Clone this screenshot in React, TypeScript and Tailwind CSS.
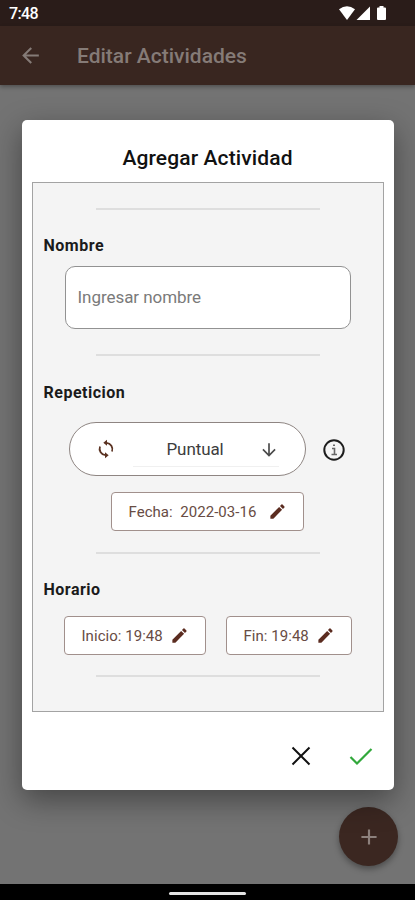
import React from "react";
import { MdArrowBack, MdArrowDownward, MdEdit, MdAdd } from "react-icons/md";

// Thin separator between the sections of the form
const Divider = () => <div className="ml-[63px] h-[2px] w-[224px] shrink-0 bg-[#dedede]" />;

const SectionTitle = ({ children }: { children: React.ReactNode }) => (
  <h3 className="ml-[11px] h-5 text-[16px] leading-5 font-bold tracking-[0.5px] text-[#1b1b1b]">{children}</h3>
);

// Outlined button with a pencil, used for the date and the hours
const EditButton = ({ label, className }: { label: string; className: string }) => (
  <button
    className={`flex h-[39px] items-center justify-between rounded-[4px] border border-[#a1908c] bg-white pr-[16px] pl-[17px] text-[15px] whitespace-pre text-[#684c44] ${className}`}
  >
    <span className="pt-px tracking-[0.04px]">{label}</span>
    <MdEdit size={19} className="text-[#5b2c20]" />
  </button>
);

// Two circular arrows
const RepeatIcon = () => (
  <svg width="20" height="20" viewBox="0 0 20 20" fill="none" stroke="#5b3322" strokeWidth="1.800">
    <path d="M10.500 3.800A6.500 6.500 0 0 1 16 12.500" />
    <path d="M9.500 16.200A6.500 6.500 0 0 1 4 7.500" />
    <path d="M11 0.800V6.800L7.300 3.800Z" fill="#5b3322" stroke="none" />
    <path d="M9 13.200V19.200L12.700 16.200Z" fill="#5b3322" stroke="none" />
  </svg>
);

const StatusBar = () => (
  <div className="flex h-[26px] items-center justify-between bg-[#2a1c19] pr-7 pl-[9px] text-white">
    <span className="pt-[2px] text-[16px] leading-none font-medium tracking-[-0.6px]">7:48</span>
    <svg width="49" height="16" viewBox="0 0 49 16" fill="currentColor">
      <path d="M1 4.300Q9 -1.600 17 4.300L9 15Z" />
      <path d="M32 1.500V15H18.500Z" />
      <path d="M40 2.500h1.500V1h4v1.500h1.500q1 0 1 1v10.500q0 1-1 1h-7q-1 0-1-1v-10.500q0-1 1-1Z" />
    </svg>
  </div>
);

const App = () => {
  return (
    <div className="relative flex h-[900px] w-[415px] flex-col overflow-hidden bg-[#737373] font-[Roboto,sans-serif]">
      <StatusBar />

      {/* App bar */}
      <header className="flex h-[59px] shrink-0 items-center bg-[#392620] pl-[18px] text-[#857b77] shadow-[0_2px_4px_rgba(0,0,0,0.3)]">
        <MdArrowBack size={25} />
        <h1 className="ml-[34px] pt-[2px] text-[21px] font-medium">Editar Actividades</h1>
      </header>

      {/* Screen behind the dialog */}
      <main className="flex flex-1 items-end justify-end pr-[17px] pb-[18px]">
        <button className="flex size-[59px] items-center justify-center rounded-full bg-[#3b2721] text-[#8d817d] shadow-[0_3px_6px_rgba(0,0,0,0.35)]">
          <MdAdd size={26} />
        </button>
      </main>

      {/* Gesture bar */}
      <div className="flex h-4 shrink-0 items-center justify-center bg-black pt-[2px]">
        <div className="h-[3px] w-[77px] rounded-full bg-[#e4e4e4]" />
      </div>

      {/* Dialog */}
      <div className="absolute inset-0 flex items-start justify-center pt-[120px]">
        <section className="flex h-[670px] w-[372px] flex-col rounded-[5px] bg-white px-[10px] shadow-[0_10px_30px_rgba(0,0,0,0.4)]">
          <h2 className="flex h-[62px] items-center justify-center pt-[15px] text-[21px] font-medium tracking-[0.12px] text-[#111]">
            Agregar Actividad
          </h2>

          <div className="flex h-[530px] w-[352px] flex-col border border-[#a3a3a3] bg-[#f4f4f4] pt-[25px]">
            <Divider />
            <div className="mt-[26px]">
              <SectionTitle>Nombre</SectionTitle>
            </div>
            <input
              placeholder="Ingresar nombre"
              className="mt-[10px] mb-[25px] ml-8 h-[63px] w-[286px] rounded-[10px] border border-[#929292] bg-white px-[12px] pb-[2px] text-[17px] tracking-[-0.05px] outline-none placeholder:text-[#7a7a7a]"
            />

            <Divider />
            <div className="mt-[27px]">
              <SectionTitle>Repeticion</SectionTitle>
            </div>
            <div className="mt-[19px] ml-9 flex items-center">
              <div className="flex h-[54px] w-[237px] items-center rounded-full border border-[#8e8582] bg-white pl-[26px]">
                <RepeatIcon />
                <div className="ml-[17px] flex h-[35px] w-[146px] items-center justify-between border-b border-[#f0f0f0] pt-[2px] pl-[34px]">
                  <span className="text-[17px] tracking-[-0.1px] text-[#3d3d3d]">Puntual</span>
                  <MdArrowDownward size={20} className="text-[#4a4a4a]" />
                </div>
              </div>
              <svg width="22" height="22" viewBox="0 0 22 22" className="mt-px ml-[17px]" fill="none">
                <circle cx="11" cy="11" r="9.700" stroke="#1c1c1c" strokeWidth="2" />
                <path d="M9 9.500h2.500v6M8.500 15.500h5.500M10 6.300h2" stroke="#666" strokeWidth="1.600" />
              </svg>
            </div>
            <EditButton label="Fecha:  2022-03-16" className="mt-4 mb-[21px] ml-[78px] w-[193px]" />

            <Divider />
            <div className="mt-[26px]">
              <SectionTitle>Horario</SectionTitle>
            </div>
            <div className="mt-4 mb-[20px] ml-[31px] flex gap-[20px]">
              <EditButton label="Inicio: 19:48" className="w-[142px]" />
              <EditButton label="Fin: 19:48" className="w-[126px]" />
            </div>

            <Divider />
          </div>

          {/* Dialog actions */}
          <div className="flex flex-1 items-center justify-end gap-[38px] pt-[10px] pr-[11px]">
            <svg width="20" height="20" viewBox="0 0 20 20" fill="none" stroke="#111" strokeWidth="2">
              <path d="M1.500 1.500L18.500 18.500M18.500 1.500L1.500 18.500" />
            </svg>
            <svg width="24" height="20" viewBox="0 0 24 20" fill="none" stroke="#31a83b" strokeWidth="2.200">
              <path d="M1.500 11L8 17.500L22.500 3" />
            </svg>
          </div>
        </section>
      </div>
    </div>
  );
};

export default App;
